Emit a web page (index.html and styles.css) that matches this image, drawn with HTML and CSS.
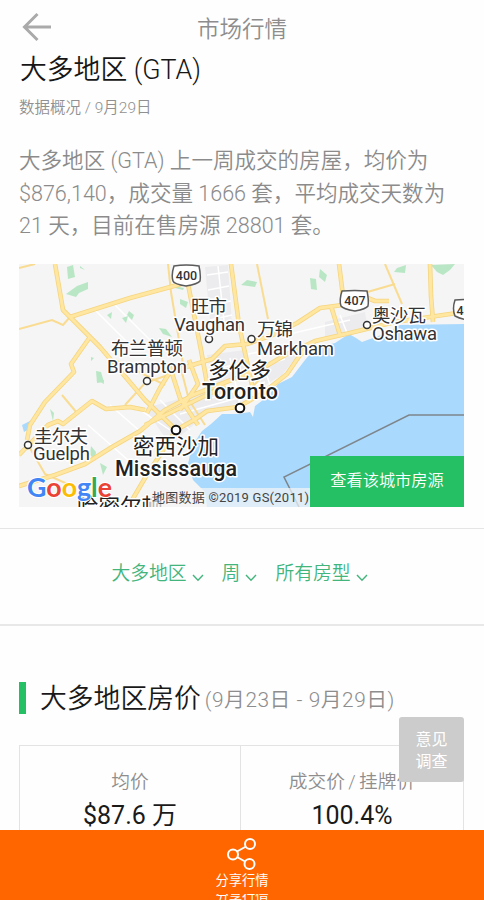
FILE: index.html
```html
<!DOCTYPE html>
<html lang="zh-CN">
<head>
<meta charset="utf-8">
<meta name="viewport" content="width=device-width, initial-scale=1">
<title>市场行情</title>
<link rel="stylesheet" href="styles.css">
</head>
<body>
<div class="screen">
  <header class="topbar">
    <svg class="back" viewBox="0 0 30 30"><path d="M29 15H3M15.500 2L2.500 15L15.500 28"/></svg>
    <span class="topbar-title">市场行情</span>
  </header>
  <main>
    <section class="intro">
      <h1>大多地区 (GTA)</h1>
      <p class="date">数据概况 / 9月29日</p>
      <p class="summary">大多地区 (GTA) 上一周成交的房屋，均价为<br>$876,140，成交量 1666 套，平均成交天数为<br>21 天，目前在售房源 28801 套。</p>
    </section>
    <div class="map">
      <svg viewBox="19 264 445 243">
        <rect x="19" y="264" width="445" height="243" fill="#f5f5f5"/>
        <g fill="#ececef">
          <path d="M205 267L228 265L232 325L210 320ZM207 355L245 350L250 375L213 385ZM145 408L175 400L225 385L245 400L205 415L170 445ZM325 322L365 312L368 330L325 338ZM263 365L302 350L282 375L260 388Z"/>
        </g>
        <g class="streets">
          <path d="M207 275L228 272M208 290L229 286M209 305L231 301M210 320L232 315M218 266L225 330M248 354L285 347M250 370L285 359M214 370L250 360M215 385L260 370M205 400L265 382M180 414L245 396M230 358L240 405M260 355L270 385M95 310L135 350M115 305L150 340M88 425L145 475M110 405L150 440M140 410L170 430M160 400L190 430M285 335L350 320M340 315L347 333"/>
        </g>
        <g fill="#b9e7c5">
          <path d="M67 267L73 265L75 277L68 279ZM77 286L88 282L88 289L79 293L76 297L66 294ZM80 266L85 270L80 268ZM107 315L112 312L111 319ZM122 318L128 316L126 323ZM129 311L134 315L132 320L127 315ZM159 328L166 329L172 337L163 334ZM174 286L184 288L183 290L175 288ZM180 299L188 302L186 308L180 304ZM91 357L94 358L91 361ZM96 371L101 372L104 382L97 383ZM50 409L54 413L53 421ZM91 446L96 452L95 460L90 455ZM100 463L107 467L103 475ZM96 380L104 380L104 384ZM247 280L257 282L255 287L241 285ZM310 278L316 279L317 290L311 289ZM320 269L327 275L325 282L319 277ZM397 268L406 265L405 273L394 272ZM431 265L455 264L450 270L443 275L437 272ZM55 427L61 432L56 434Z"/>
        </g>
        <path fill="#a9d9fd" d="M464 324L400 325L384 334L362 342L356 338L349 334L335 343L315 348L305 360L292 377L278 384L267 397L255 406L253 417L250 412L239 414L222 414L211 424L202 431L192 446L188 464L193 480L205 492L207 507H464Z"/>
        <path fill="#a9d9fd" d="M22 425L30 421L31 428L24 432Z"/>
        <g class="minor">
          <path d="M19 329L52 320L63 325L70 317M19 268L35 264M168 264L171 292L184 370M257 264L268 319M385 264L402 304M364 293L395 284M62 395L77 413M27 443L45 474L72 486M125 405L145 383L168 375M180 365L189 400L205 425M268 370L245 395M115 360L165 385"/>
        </g>
        <g class="edge">
          <path d="M55 264L63 310L70 317L100 347L145 400L174 428M70 317L130 298L185 283M90 337L71 364L74 372L45 402L30 425L27 440M188 284L201 350L210 400M231 264L239 325L252 385M147 413L160 388L170 372L212 359L225 346L247 344L275 334L297 323L320 308L350 304L360 295L375 301L389 301M339 264L343 296M430 264L431 296L433 322M331 306L340 335M19 486L55 475L85 464L112 447L140 431L165 410L193 395L226 382L263 368L285 355L315 341L350 333L395 322L464 312M128 507L145 478L176 430L194 420L207 411L238 407L263 393L287 374L300 355L315 341M19 455L48 425L58 421L63 424L92 401L106 409L130 407L145 410M169 364L180 398L198 425M180 410L198 384L189 360M145 425L225 386"/>
        </g>
        <g class="road">
          <path d="M55 264L63 310L70 317L100 347L145 400L174 428M70 317L130 298L185 283M90 337L71 364L74 372L45 402L30 425L27 440M188 284L201 350L210 400M231 264L239 325L252 385M147 413L160 388L170 372L212 359L225 346L247 344L275 334L297 323L320 308L350 304L360 295L375 301L389 301M339 264L343 296M430 264L431 296L433 322M331 306L340 335M19 486L55 475L85 464L112 447L140 431L165 410L193 395L226 382L263 368L285 355L315 341L350 333L395 322L464 312M128 507L145 478L176 430L194 420L207 411L238 407L263 393L287 374L300 355L315 341M19 455L48 425L58 421L63 424L92 401L106 409L130 407L145 410M169 364L180 398L198 425M180 410L198 384L189 360M145 425L225 386"/>
        </g>
        <path class="border" d="M464 415H409L284 477L299 507"/>
        <g class="shield">
          <path d="M174 266Q186 264 199 266Q201 275 200 281Q198 284 186 286Q174 284 173 281Q171 275 174 266Z"/>
          <path d="M342 291Q355 290 367 291Q369 300 368 306Q366 309 355 311Q343 309 341 306Q339 300 342 291Z"/>
          <path d="M455 300Q464 299 480 300V320Q464 321 455 316Q452 309 455 300Z"/>
        </g>
        <g class="shield-text">
          <text x="186.500" y="280">400</text>
          <text x="355" y="305">407</text>
          <text x="460" y="315">4</text>
        </g>
        <g class="dots">
          <circle cx="209" cy="339" r="3.500"/><circle cx="251.500" cy="339" r="3.500"/><circle cx="367" cy="325" r="3.500"/><circle cx="147" cy="381" r="3.500"/><circle cx="28" cy="445" r="3.500"/>
          <circle class="big" cx="240" cy="408" r="4.300"/><circle class="big" cx="176" cy="430" r="4.300"/>
        </g>
        <g class="labels">
          <text x="191" y="313" textLength="36">旺市</text>
          <text x="174" y="331" textLength="71">Vaughan</text>
          <text x="257" y="336" textLength="36">万锦</text>
          <text x="257" y="354.500" textLength="77">Markham</text>
          <text x="372" y="322" textLength="54">奥沙瓦</text>
          <text x="372" y="340" textLength="65">Oshawa</text>
          <text x="111" y="355" textLength="72">布兰普顿</text>
          <text x="107" y="373" textLength="80">Brampton</text>
          <text x="34" y="443" textLength="54">圭尔夫</text>
          <text x="33" y="460" textLength="57">Guelph</text>
          <text class="city" x="208" y="378" textLength="63">多伦多</text>
          <text class="city strong" x="202" y="399" textLength="76">Toronto</text>
          <text class="city" x="133" y="454" textLength="86">密西沙加</text>
          <text class="city strong" x="115" y="476" textLength="122">Mississauga</text>
          <text class="city" x="77" y="514" textLength="86">哈密尔顿</text>
        </g>
        <text class="google" x="27" y="496.500" textLength="85" lengthAdjust="spacingAndGlyphs"><tspan fill="#4285f4">G</tspan><tspan fill="#ea4335">o</tspan><tspan fill="#fbbc05">o</tspan><tspan fill="#4285f4">g</tspan><tspan fill="#34a853">l</tspan><tspan fill="#ea4335">e</tspan></text>
        <rect x="150" y="488" width="161" height="19" fill="#f5f5f5" fill-opacity=".7"/>
        <text class="credit" x="152" y="501.500" textLength="157">地图数据 ©2019 GS(2011)</text>
      </svg>
      <a class="map-button">查看该城市房源</a>
    </div>
    <nav class="filters">
      <span class="filter">大多地区<svg viewBox="0 0 12 8"><path d="M1 1L6 6.200L11 1"/></svg></span>
      <span class="filter">周<svg viewBox="0 0 12 8"><path d="M1 1L6 6.200L11 1"/></svg></span>
      <span class="filter">所有房型<svg viewBox="0 0 12 8"><path d="M1 1L6 6.200L11 1"/></svg></span>
    </nav>
    <section class="prices">
      <h2><span class="heading">大多地区房价</span><span class="range">(9月23日 - 9月29日)</span></h2>
      <div class="stats">
        <div class="stat"><span class="label">均价</span><span class="value">$87.6 万</span></div>
        <div class="stat"><span class="label">成交价 / 挂牌价</span><span class="value">100.4%</span></div>
      </div>
    </section>
  </main>
  <div class="survey">意见<br>调查</div>
  <footer class="share">
    <svg viewBox="0 0 30 32"><path d="M10 13.500L19 8.500M10 19L18 23.500"/><circle cx="23" cy="6" r="5"/><circle cx="6" cy="16.500" r="5"/><circle cx="22.500" cy="26" r="5"/></svg>
    <span class="share-text">分享行情</span>
    <span class="share-next"><span>分享行情</span></span>
  </footer>
</div>
</body>
</html>
```
FILE: styles.css
```css
* { box-sizing: border-box; }
body { margin: 0; background: #fefefe; font-family: Roboto, "Noto Sans CJK SC", sans-serif; font-weight: 350; color: #222; }
h1, h2, p { margin: 0; font-weight: 350; }
.screen { position: relative; height: 900px; overflow: hidden; display: flex; flex-direction: column; white-space: nowrap; }
main { flex: 1; min-height: 0; overflow: hidden; }
.topbar { height: 54px; display: grid; grid-template-columns: 1fr auto 1fr; align-items: center; padding-left: 22px; padding-right: 22px; }
.back { width: 30px; height: 30px; fill: none; stroke: #aaa; stroke-width: 3; }
.topbar-title { font-size: 22.500px; line-height: 30px; color: #8d8d8d; padding-top: 3px; }
.intro { padding: 0 19px; height: 210px; }
h1 { font-size: 26.800px; line-height: 32px; padding-left: 1px; color: #161616; }
.date { font-size: 15.500px; line-height: 20px; margin-top: 12px; color: #909090; }
.summary { font-size: 21.550px; line-height: 32.500px; margin-top: 27px; color: #8b8b8b; }
.map { position: relative; margin: 0 20px 0 19px; height: 243px; }
.map > svg { display: block; width: 445px; height: 243px; }
.map-button { position: absolute; right: 0; bottom: 0; width: 154px; height: 51px; background: #24c063; color: #fff; font-size: 16.200px; line-height: 50px; text-align: center; }
.streets path { fill: none; stroke: #fff; stroke-width: 1.500; }
.minor path { fill: none; stroke: #f9dc91; stroke-width: 2; }
.edge path { fill: none; stroke: #f5d57f; stroke-width: 4.600; stroke-linejoin: round; }
.road path { fill: none; stroke: #ffe6a1; stroke-width: 3; stroke-linejoin: round; }
.border { fill: none; stroke: #7e858b; stroke-width: 1.500; }
.shield path { fill: #fff; stroke: #5b5b5b; stroke-width: 1.500; }
.shield-text text { font-size: 12.500px; font-weight: 500; fill: #333; text-anchor: middle; }
.dots circle { fill: #fff; stroke: #333; stroke-width: 1.500; }
.dots .big { stroke: #111; stroke-width: 2; }
.labels text { font-size: 18.500px; font-weight: 400; fill: #333; stroke: #fff; stroke-width: 3px; stroke-linejoin: round; paint-order: stroke; }
.labels .city { font-size: 21.500px; fill: #222; }
.labels .strong { font-weight: 500; font-size: 21.500px; }
.google { font-family: Lato, sans-serif; font-size: 27px; font-weight: 700; stroke: #fff; stroke-width: 2px; paint-order: stroke; }
.credit { font-size: 13px; font-weight: 400; fill: #444; }
.filters { margin-top: 21px; height: 98px; border-top: 1px solid #e5e5e5; border-bottom: 2px solid #e8e8e8; display: flex; justify-content: center; gap: 18px; padding: 31px 5px 0 0; color: #42b57c; font-size: 18.800px; line-height: 28px; }
.filter { display: flex; }
.filter svg { width: 12px; height: 8px; margin: 14px 0 0 5px; fill: none; stroke: #42b57c; stroke-width: 1.400; }
.prices { padding: 56px 20px 0 19px; }
h2 { height: 32px; border-left: 7px solid #24c063; padding-left: 14px; display: flex; align-items: center; }
.heading { font-size: 26.800px; line-height: 32px; padding-top: 1px; color: #191919; }
.range { font-size: 20.800px; letter-spacing: .55px; line-height: 32px; margin: 4px 0 0 4px; color: #8d8d8d; }
.stats { margin-top: 31px; height: 150px; border: 1px solid #e3e3e3; display: grid; grid-template-columns: 220px 1fr; }
.stat { display: flex; flex-direction: column; align-items: center; padding-top: 22px; }
.stat + .stat { border-left: 1px solid #e3e3e3; }
.label { font-size: 18.700px; line-height: 28px; color: #8e8e8e; word-spacing: -1.200px; }
.value { font-size: 25px; font-weight: 400; line-height: 32px; margin-top: 4px; color: #1a1a1a; }
.survey { position: absolute; left: 399px; top: 717px; width: 65px; height: 65px; border-radius: 3px; background: #ccc; color: #fff; font-size: 16px; font-weight: 400; line-height: 22px; padding-top: 12px; text-align: center; }
.share { height: 70px; background: #ff6600; color: #fff; display: flex; flex-direction: column; align-items: center; font-size: 13.300px; font-weight: 400; padding-top: 8px; }
.share svg { width: 30px; height: 32px; fill: none; stroke: #fff; stroke-width: 2; }
.share-text { line-height: 22px; }
.share-next { height: 6px; overflow: hidden; margin-top: 2px; }
.share-next span { display: block; line-height: 20px; margin-top: -7px; }
```
